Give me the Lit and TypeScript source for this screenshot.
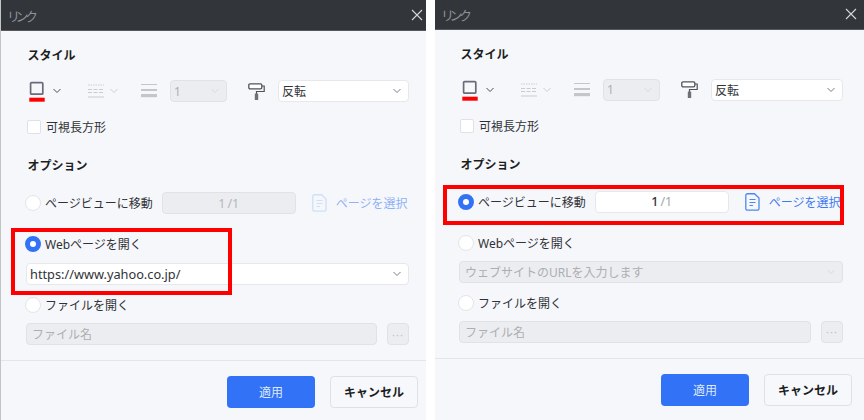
import { LitElement, html, css } from "lit";
import { customElement, property } from "lit/decorators.js";

const chevron = (color: string) => html`<svg class="chev" width="10" height="6" viewBox="0 0 10 6"><path d="M1.5 1 L5 4.5 L8.5 1" fill="none" stroke="${color}" stroke-width="1"/></svg>`;

const docIcon = (color: string) => html`<svg width="15" height="18" viewBox="0 0 15 18"><path d="M2.5 .75 H9.5 L14 5 V15.5 A1.7 1.7 0 0 1 12.3 17.2 H2.5 A1.7 1.7 0 0 1 .8 15.5 V2.5 A1.7 1.7 0 0 1 2.5 .75 Z" fill="none" stroke="${color}" stroke-width="1.3"/><path d="M4.5 6.5 H10.5 M4.5 9.5 H10.5 M4.5 12.5 H8" stroke="${color}" stroke-width="1.2" fill="none"/></svg>`;

@customElement("link-panel")
class LinkPanel extends LitElement {
  @property() mode = "web";
  static styles = css`
    :host { display: block; position: relative; width: 429px; height: 420px; background: #f6f7fb; font-family: "Noto Sans", "Noto Sans CJK JP", sans-serif; font-size: 12px; color: #2f3236; white-space: nowrap; }
    :host(.left) { --title: 31px; --pad: 25px; --w: 383px; --url-gap: 10px; }
    :host(.right) { --title: 29.5px; --pad: 24px; --w: 384px; --url-gap: 9px; }
    .title { height: var(--title); box-sizing: border-box; background: #32363a; border-bottom: 1px solid #55585c; display: flex; align-items: center; justify-content: space-between; padding: 0 7px 0 7px; color: #8e9194; font-size: 13px; font-feature-settings: "palt"; letter-spacing: -2.4px; }
    .body { padding: 16px 20px 0 var(--pad); width: var(--w); }
    .h { height: 18px; line-height: 18px; font-weight: 700; font-size: 12px; color: #1c1e22; padding-left: 1.5px; }
    .toolbar { height: 22px; margin-top: 15px; display: flex; align-items: center; }
    .sel { height: 22px; box-sizing: border-box; border: 1px solid #e6e8ec; border-radius: 4px; background: #fff; display: flex; align-items: center; justify-content: space-between; padding: 0 6px 0 3px; color: #2f3236; font-size: 12px; }
    .sel.dis { background: #ecedf0; border-color: #e0e2e6; color: #acaeb2; }
    .sel.grow { flex: 1; }
    .small { width: 57px; margin-left: 13px; }
    .check { margin-top: 17px; height: 16px; display: flex; align-items: center; gap: 5px; padding-left: 1px; }
    .box { width: 12px; height: 12px; border: 1px solid #dfe1e5; border-radius: 2px; background: #fff; }
    .opt { margin-top: 22px; }
    .row { display: flex; align-items: center; height: 18px; gap: 4px; margin-left: -1px; }
    .radio { width: 16px; height: 16px; box-sizing: border-box; border-radius: 50%; background: #fff; border: 1px solid #e3e5e9; flex: none; }
    .radio.on { border: 5px solid #3172f6; }
    .r1 { height: 22px; margin-top: 17px; }
    .num { width: 134px; height: 22px; box-sizing: border-box; flex: none; margin-left: 5px; border: 1px solid #e0e2e6; border-radius: 4px; background: #ecedf0; color: #b4b6ba; display: flex; align-items: center; justify-content: center; gap: 2px; font-size: 12.5px; }
    .num.on { background: #fff; border-color: #e6e8ec; color: #2f3236; font-weight: 500; }
    .num.on .tot { color: #a4a6aa; font-weight: 400; }
    .pick { display: flex; align-items: center; margin-left: 12px; gap: 9px; color: #8fb2f5; flex: none; }
    .pick.on { color: #3f7bf0; }
    .r2 { margin-top: 21px; }
    .url { margin-top: var(--url-gap); }
    .url.live span { font-size: 12.75px; }
    .url.dis { padding-left: 5px; }
    .r3 { margin-top: 11px; }
    .file { margin-top: 9px; display: flex; gap: 10px; }
    .inp { flex: 1; height: 22px; box-sizing: border-box; border: 1px solid #e0e2e6; border-radius: 4px; background: #ecedf0; color: #acaeb2; display: flex; align-items: center; padding: 0 5px; font-size: 12px; }
    .dots { width: 22px; height: 22px; box-sizing: border-box; border: 1px solid #e0e2e6; border-radius: 4px; background: #ecedf0; color: #c0c2c6; display: flex; align-items: center; justify-content: center; font-size: 11px; letter-spacing: 1px; }
    .divider { height: 1px; background: #e4e5e9; margin-top: 15px; }
    .foot { display: flex; justify-content: flex-end; gap: 15px; padding: 15px 12px 0 0; }
    .btn { width: 88px; height: 32px; box-sizing: border-box; border-radius: 4px; display: flex; align-items: center; justify-content: center; font-size: 12px; }
    .btn.pri { background: #3172f6; color: #dfe9ff; }
    .btn.sec { border: 1px solid #dfe1e5; background: #f7f8fc; color: #1c1e22; font-weight: 700; }
    .mark { position: absolute; box-sizing: border-box; border: 4px solid #f00; pointer-events: none; }
    :host(.left) .mark { left: 10px; top: 228px; width: 221px; height: 67px; }
    :host(.right) .mark { left: 8px; top: 185px; width: 401px; height: 40px; }
    .ico { flex: none; }
    .cw { display: flex; }
    .ml6 { margin-left: 6px; }
    .ml5 { margin-left: 5px; }
    .ml26 { margin-left: 26px; }
    .ml22 { margin-left: 22px; }
    .ml21 { margin-left: 21px; }
    .ml13 { margin-left: 13px; }
  `;
  render() {
    const web = this.mode === "web";
    return html`
      <div class="title"><span>リンク</span>
        <svg width="12" height="12" viewBox="0 0 12 12"><path d="M1 1 L11 11 M11 1 L1 11" stroke="#d4d6d8" stroke-width="1.1"/></svg>
      </div>
      <div class="body">
        <div class="h">スタイル</div>
        <div class="toolbar">
          <svg class="ico" width="20" height="22" viewBox="0 0 20 22"><rect x="4.6" y="2.6" width="12.2" height="11.6" rx="1" fill="none" stroke="#676c7a" stroke-width="1.7"/><rect x="3.3" y="17.7" width="15.4" height="4" fill="#f00"/></svg>
          <span class="cw ml6">${chevron("#4a4d55")}</span>
          <svg class="ico ml26" width="16" height="14" viewBox="0 0 16 14"><path d="M0 1 H16" stroke="#c9cbcf" stroke-width="1" stroke-dasharray="1.5 1"/><path d="M0 5.5 H16" stroke="#c9cbcf" stroke-width="1" stroke-dasharray="4 1.5"/><path d="M0 8.5 H16" stroke="#c9cbcf" stroke-width="1" stroke-dasharray="4 1.5"/><path d="M0 13 H16" stroke="#c9cbcf" stroke-width="1"/></svg>
          <span class="cw ml5">${chevron("#ccced2")}</span>
          <svg class="ico ml22" width="16" height="14" viewBox="0 0 16 14"><rect y="0" width="16" height="1" fill="#c4c6ca"/><rect y="5" width="16" height="2" fill="#c4c6ca"/><rect y="10" width="16" height="3.2" fill="#c4c6ca"/></svg>
          <div class="sel dis small"><span>1</span>${chevron("#d8dade")}</div>
          <svg class="ico ml21" width="17" height="17" viewBox="0 0 17 17"><rect x=".8" y=".8" width="13" height="5" rx="1.2" fill="#fff" stroke="#4f5358" stroke-width="1.3"/><path d="M14 3 H16.2 V8.5 H8.5 V11" fill="none" stroke="#4f5358" stroke-width="1.2"/><rect x="6.8" y="10.5" width="3.4" height="6.5" rx=".6" fill="#6d7178"/></svg>
          <div class="sel grow ml13"><span>反転</span>${chevron("#7a7d84")}</div>
        </div>
        <div class="check"><div class="box"></div><span>可視長方形</span></div>
        <div class="h opt">オプション</div>
        <div class="row r1">
          <div class="radio ${web ? "" : "on"}"></div><span>ページビューに移動</span>
          <div class="num ${web ? "" : "on"}"><span>1</span><span class="tot">/1</span></div>
          <div class="pick ${web ? "" : "on"}"><span class="cw">${docIcon(web ? "#cfdff8" : "#4d88f0")}</span><span>ページを選択</span></div>
        </div>
        <div class="row r2"><div class="radio ${web ? "on" : ""}"></div><span>Webページを開く</span></div>
        <div class="sel url ${web ? "live" : "dis"}"><span>${web ? "https://www.yahoo.co.jp/" : "ウェブサイトのURLを入力します"}</span>${chevron(web ? "#7a7d84" : "#d8dade")}</div>
        <div class="row r3"><div class="radio"></div><span>ファイルを開く</span></div>
        <div class="file"><div class="inp">ファイル名</div><div class="dots">···</div></div>
      </div>
      <div class="divider"></div>
      <div class="foot"><div class="btn pri">適用</div><div class="btn sec">キャンセル</div></div>
      <div class="mark"></div>
    `;
  }
}

@customElement("app-root")
class AppRoot extends LitElement {
  static styles = css`
    :host { display: block; width: 864px; height: 420px; background: #fff; overflow: hidden; }
    .wrap { display: flex; height: 420px; }
    .edge { width: 1px; background: #c2c4c6; flex: none; }
    .clip { width: 425px; overflow: hidden; flex: none; }
    .right { margin-left: 9px; flex: none; }
  `;
  render() {
    return html`<div class="wrap">
      <div class="edge"></div>
      <div class="clip"><link-panel class="left" mode="web"></link-panel></div>
      <link-panel class="right" mode="page"></link-panel>
    </div>`;
  }
}
